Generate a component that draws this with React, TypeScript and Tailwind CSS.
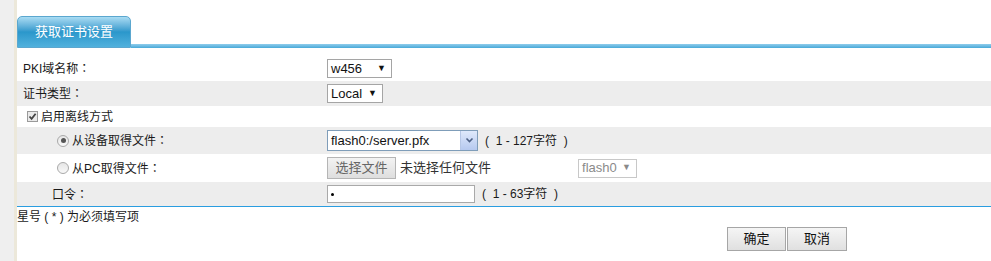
import React from "react";

const font = { fontFamily: '"Liberation Sans", Arial, "Noto Sans CJK SC", sans-serif' };
const jp = { fontFamily: '"Noto Sans CJK JP", sans-serif' };

function Colon() {
  return <span style={jp}>：</span>;
}

function Select({ value, w, disabled }: { value: string; w: string; disabled?: boolean }) {
  return (
    <div
      className={`flex items-center justify-between h-[19px] border bg-white pl-[3px] pr-[5px] text-[13px] ${w} ${
        disabled ? "border-[#c8c8c8] text-[#8a8a8a]" : "border-[#a5a5a5] text-[#111]"
      }`}
    >
      <span>{value}</span>
      <span className={`text-[9px] ${disabled ? "text-[#8a8a8a]" : "text-[#111]"}`}>▼</span>
    </div>
  );
}

function Row({ h, gray, label, children }: { h: string; gray?: boolean; label: React.ReactNode; children?: React.ReactNode }) {
  return (
    <div className={`grid grid-cols-[310px_1fr] items-center ${h} ${gray ? "bg-[#ededed]" : "bg-white"}`}>
      <div className="flex items-center">{label}</div>
      <div className="flex items-center">{children}</div>
    </div>
  );
}

function Radio({ checked }: { checked?: boolean }) {
  return (
    <span className="flex items-center justify-center w-[12px] h-[12px] rounded-full border border-[#a9a9a9] bg-gradient-to-b from-[#e6e6e6] to-[#f8f8f8]">
      {checked && <span className="w-[5px] h-[5px] rounded-full bg-[#555]" />}
    </span>
  );
}

export default function App() {
  return (
    <div className="flex w-[991px] h-[261px] bg-white text-[12px] text-[#1a1a1a]" style={font}>
      <div className="w-[17px] shrink-0 bg-[#efefef] border-r-[3px] border-[#ece8da]" />
      <div className="flex-1 min-w-0">
        {/* tab header */}
        <div className="flex items-end pt-[16px]">
          <div className="w-[114px] h-[32px] rounded-t-[5px] border border-[#5ba7cf] bg-gradient-to-b from-[#a9dcf3] via-[#2a97cb] to-[#50b1dd] flex items-center justify-center text-white text-[13px]">
            获取证书设置
          </div>
          <div className="flex-1 h-[4px] bg-gradient-to-b from-[#8fcdec] to-[#46a9d8]" />
        </div>

        {/* form rows */}
        <div className="mt-[8px]">
          <Row h="h-[25px]" label={<span className="pl-[6px]">PKI域名称<Colon /></span>}>
            <Select value="w456" w="w-[65px]" />
          </Row>
          <Row h="h-[25px]" gray label={<span className="pl-[6px]">证书类型<Colon /></span>}>
            <Select value="Local" w="w-[56px]" />
          </Row>
          <Row
            h="h-[21px]"
            label={
              <span className="flex items-center pl-[10px] gap-[3px]">
                <span className="flex items-center justify-center w-[11px] h-[11px] border border-[#9a9a9a] bg-[#eaeaea]">
                  <svg width="9" height="9" viewBox="0 0 9 9">
                    <path d="M1.5 4.5 L3.6 6.8 L7.6 1.8" fill="none" stroke="#444" strokeWidth="1.8" />
                  </svg>
                </span>
                启用离线方式
              </span>
            }
          />
          <Row
            h="h-[27px]"
            gray
            label={
              <span className="flex items-center pl-[40px] gap-[3px]">
                <Radio checked />
                <span>从设备取得文件<Colon /></span>
              </span>
            }
          >
            <div className="flex items-center h-[21px] w-[151px] border border-[#7f9db9] bg-white">
              <span className="flex-1 pl-[3px] text-[13px] text-[#111]">flash0:/server.pfx</span>
              <span className="flex items-center justify-center w-[17px] h-full bg-gradient-to-b from-[#dfe9fb] to-[#b6c9ef] border-l border-[#b6c7e6]">
                <svg width="9" height="7" viewBox="0 0 9 7">
                  <path d="M1.5 1.5 L4.5 4.5 L7.5 1.5" fill="none" stroke="#4d6185" strokeWidth="1.6" />
                </svg>
              </span>
            </div>
            <span className="ml-[7px]">( &nbsp;1 - 127字符 &nbsp;)</span>
          </Row>
          <Row
            h="h-[28px]"
            label={
              <span className="flex items-center pl-[40px] gap-[3px]">
                <Radio />
                <span>从PC取得文件<Colon /></span>
              </span>
            }
          >
            <span className="flex items-center justify-center w-[69px] h-[22px] border border-[#b5b5b5] bg-gradient-to-b from-[#f3f3f3] to-[#dedede] text-[13px] text-[#666]">
              选择文件
            </span>
            <span className="ml-[4px] text-[13px] text-[#333]">未选择任何文件</span>
            <span className="ml-[87px]">
              <Select value="flash0" w="w-[59px]" disabled />
            </span>
          </Row>
          <Row h="h-[24px]" gray label={<span className="pl-[35px]">口令<Colon /></span>}>
            <div className="flex items-center h-[18px] w-[148px] border border-[#a9a9a9] bg-white pl-[3px]">
              <span className="w-[3px] h-[3px] rounded-full bg-black" />
            </div>
            <span className="ml-[7px]">( &nbsp;1 - 63字符 &nbsp;)</span>
          </Row>
          <div className="h-px bg-[#2a9de0]" />
        </div>

        <div className="pt-[2px] leading-[16px]">星号 ( * ) 为必须填写项</div>

        <div className="flex pl-[710px] mt-[2px] gap-[1px]">
          <span className="flex items-center justify-center w-[59px] h-[24px] border border-[#a6a6a6] bg-gradient-to-b from-[#f5f5f5] to-[#e0e0e0] text-[13px] text-[#111]">
            确定
          </span>
          <span className="flex items-center justify-center w-[60px] h-[24px] border border-[#a6a6a6] bg-gradient-to-b from-[#f5f5f5] to-[#e0e0e0] text-[13px] text-[#111]">
            取消
          </span>
        </div>
      </div>
    </div>
  );
}
